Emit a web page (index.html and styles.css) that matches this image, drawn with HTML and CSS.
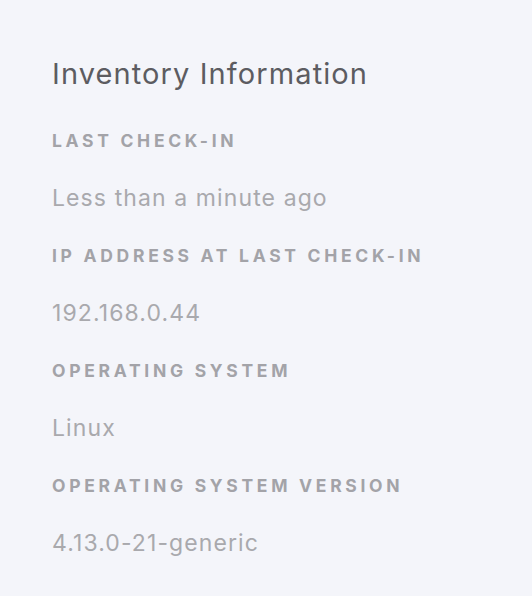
FILE: index.html
```html
<!DOCTYPE html>
<html>
<head>
<meta charset="utf-8">
<link rel="stylesheet" href="styles.css">
</head>
<body>
<section class="panel">
  <h2 class="title">Inventory Information</h2>
  <dl class="list">
    <dt class="label">Last Check-in</dt>
    <dd class="value">Less than a minute ago</dd>
    <dt class="label">IP Address at Last Check-in</dt>
    <dd class="value">192.168.0.44</dd>
    <dt class="label">Operating System</dt>
    <dd class="value">Linux</dd>
    <dt class="label">Operating System Version</dt>
    <dd class="value">4.13.0-21-generic</dd>
  </dl>
</section>
</body>
</html>
```
FILE: styles.css
```css
html, body {
  margin: 0;
  padding: 0;
  background: #f4f5fa;
  height: 100%;
}
.panel {
  padding: 56px 52px 0 52px;
  font-family: Inter, "Open Sans", sans-serif;
}
.title {
  margin: 0;
  font-size: 29px;
  font-weight: 400;
  letter-spacing: 1.1px;
  line-height: 36px;
  color: #5c5c61;
}
.list {
  margin: 39px 0 0 0;
}
.label {
  margin: 0;
  font-size: 17.5px;
  font-weight: 700;
  letter-spacing: 3.7px;
  text-transform: uppercase;
  color: #a3a3a8;
  line-height: 20px;
}
.value {
  margin: 32px 0 33px 0;
  font-size: 23px;
  letter-spacing: 1.1px;
  line-height: 30px;
  color: #a9a9ad;
}
```
